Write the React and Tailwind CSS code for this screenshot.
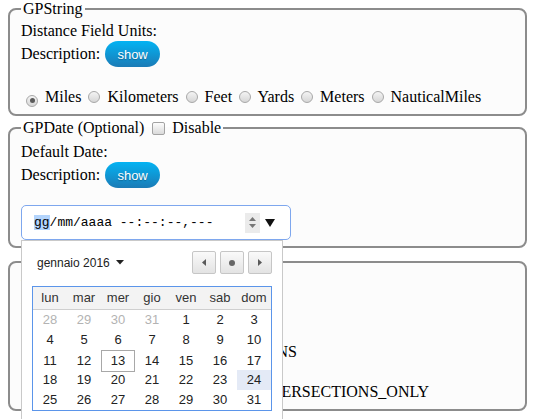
import React from "react";

const Radio = ({ checked, tight }) => (
  <span
    className={
      "inline-flex items-center justify-center w-[12px] h-[12px] rounded-full border border-[#a8a8a8] bg-[linear-gradient(#f4f4f4,#d6d6d6)] mr-[3px] align-[-1px] " +
      (tight ? "ml-[3px]" : "ml-[5px]")
    }
  >
    {checked && <span className="block w-[5px] h-[5px] rounded-full bg-[#5a5a5a]" />}
  </span>
);

const Opt = ({ label, checked, tight }) => (
  <span className="whitespace-nowrap">
    <Radio checked={checked} tight={tight} /> {label}
  </span>
);

const OptRow = ({ items, checkedIndex, tight }) => (
  <div className="leading-[20px]">
    {items.map((l, i) => (
      <React.Fragment key={l}>
        {i > 0 && " "}
        <Opt label={l} checked={i === checkedIndex} tight={tight && i > 0} />
      </React.Fragment>
    ))}
  </div>
);

const ShowBtn = () => (
  <button className="ml-[5px] w-[55px] h-[26px] rounded-full bg-[linear-gradient(to_bottom,#03b3f3,#1b7bb6)] text-white text-[13px] font-['Liberation_Sans',sans-serif] leading-none [text-shadow:0_1px_1px_rgba(0,0,0,0.25)]">
    show
  </button>
);

const Checkbox = () => (
  <span className="inline-block w-[13px] h-[13px] ml-[4px] mr-[3px] border border-[#a3a3a3] rounded-[2px] bg-[linear-gradient(#fdfdfd,#dadada)] align-[-2px]" />
);

const NavBtn = ({ children }) => (
  <div className="w-[24px] h-[23px] border border-[#c6c6c6] rounded-[2px] bg-[linear-gradient(#fafafa,#e3e3e3)] flex items-center justify-center">
    {children}
  </div>
);

const heads = ["lun", "mar", "mer", "gio", "ven", "sab", "dom"];
const weeks = [
  [28, 29, 30, 31, 1, 2, 3],
  [4, 5, 6, 7, 8, 9, 10],
  [11, 12, 13, 14, 15, 16, 17],
  [18, 19, 20, 21, 22, 23, 24],
  [25, 26, 27, 28, 29, 30, 31],
];

const Calendar = () => (
  <div className="absolute left-0 top-[35px] z-10 w-[262px] h-[200px] bg-white border border-[#c9c9c9] px-[10px] pt-[10px] font-['Liberation_Sans',sans-serif] text-[13px] text-[#222]">
    <div className="flex items-center justify-between h-[23px]">
      <div className="flex items-center pl-[5px] gap-[6px] text-[12px]">
        <span>gennaio 2016</span>
        <svg width="8" height="5" viewBox="0 0 8 5">
          <polygon points="0,0 8,0 4,4.5" fill="#222" />
        </svg>
      </div>
      <div className="flex gap-[4px]">
        <NavBtn>
          <svg width="4" height="7" viewBox="0 0 4 7">
            <polygon points="4,0 4,7 0,3.5" fill="#5a5a5a" />
          </svg>
        </NavBtn>
        <NavBtn>
          <svg width="6" height="6" viewBox="0 0 6 6">
            <circle cx="3" cy="3" r="3" fill="#666" />
          </svg>
        </NavBtn>
        <NavBtn>
          <svg width="4" height="7" viewBox="0 0 4 7">
            <polygon points="0,0 0,7 4,3.5" fill="#5a5a5a" />
          </svg>
        </NavBtn>
      </div>
    </div>
    <div className="mt-[12px] border border-[#5b95ea]">
      <div className="grid grid-cols-7 h-[23px] bg-[#f3f3f3] border-b border-[#cfcfcf] text-[#333]">
        {heads.map((h) => (
          <div key={h} className="flex items-center justify-center">
            {h}
          </div>
        ))}
      </div>
      {weeks.map((w, wi) => (
        <div key={wi} className="grid grid-cols-7 h-[20px]">
          {w.map((d, di) => {
            const prev = wi === 0 && d > 20;
            const today = wi === 2 && d === 13;
            const sel = wi === 3 && d === 24;
            return (
              <div
                key={di}
                className={
                  "flex items-center justify-center " +
                  (prev ? "text-[#b3b3b3] " : "") +
                  (today ? "border border-[#a8a8a8] " : "") +
                  (sel ? "bg-[#e4eaf6] " : "")
                }
              >
                {d}
              </div>
            );
          })}
        </div>
      ))}
    </div>
  </div>
);

const fs =
  "mx-2 border-2 border-[#8c8c8c] rounded-lg bg-[#fcfcfc] px-[11px] pb-[7px]";

export default function App() {
  return (
    <div className="h-[419px] overflow-hidden bg-white font-['Liberation_Serif',serif] text-[16px] text-black">
      <fieldset className={fs}>
        <legend className="px-[2px] leading-[18px]">GPString</legend>
        <div className="mt-[3px] h-[20px] leading-[20px]">Distance Field Units:</div>
        <div className="flex items-center h-[26px]">
          <span>Description:</span>
          <ShowBtn />
        </div>
        <div className="h-[20px]" />
        <OptRow
          items={["Miles", "Kilometers", "Feet", "Yards", "Meters", "NauticalMiles"]}
          checkedIndex={0}
          tight
        />
      </fieldset>

      <fieldset className={fs + " mt-[3px] !pb-[6px]"}>
        <legend className="px-[2px] leading-[18px]">
          GPDate (Optional) <Checkbox /> Disable
        </legend>
        <div className="mt-[5px] h-[20px] leading-[20px]">Default Date:</div>
        <div className="flex items-center h-[26px]">
          <span>Description:</span>
          <ShowBtn />
        </div>
        <div className="relative mt-[17px] w-[270px] h-[35px]">
          <div className="w-full h-full rounded-[5px] border border-[#7ea7ee] bg-white flex items-center pl-[12px] pr-[15px] font-['Liberation_Mono',monospace] text-[13px] text-black">
            <span className="whitespace-pre">
              <span className="bg-[#b3d4fc]">gg</span>/mm/aaaa --:--:--,---
            </span>
            <div className="ml-auto w-[15px] h-[20px] bg-[#ebebeb] flex flex-col items-center justify-center gap-[3px]">
              <svg width="7" height="4" viewBox="0 0 7 4">
                <polygon points="0,4 7,4 3.5,0" fill="#777" />
              </svg>
              <svg width="7" height="4" viewBox="0 0 7 4">
                <polygon points="0,0 7,0 3.5,4" fill="#777" />
              </svg>
            </div>
            <svg className="ml-[5px]" width="10" height="8" viewBox="0 0 10 8">
              <polygon points="0,0 10,0 5,8" fill="#111" />
            </svg>
          </div>
          <Calendar />
        </div>
      </fieldset>

      <fieldset className={fs + " mt-[5px]"}>
        <legend className="px-[2px] leading-[18px]">GPString</legend>
        <div className="mt-[5px] h-[20px] leading-[20px]">UTurn at Junctions:</div>
        <div className="flex items-center h-[26px]">
          <span>Description:</span>
          <ShowBtn />
        </div>
        <div className="h-[20px]" />
        <OptRow
          items={[
            "ALLOW_UTURNS",
            "NO_UTURNS",
            "ALLOW_DEAD_ENDS_ONLY",
            "ALLOW_DEAD_ENDS_AND_INTERSECTIONS_ONLY",
          ]}
          checkedIndex={-1}
        />
      </fieldset>
    </div>
  );
}
